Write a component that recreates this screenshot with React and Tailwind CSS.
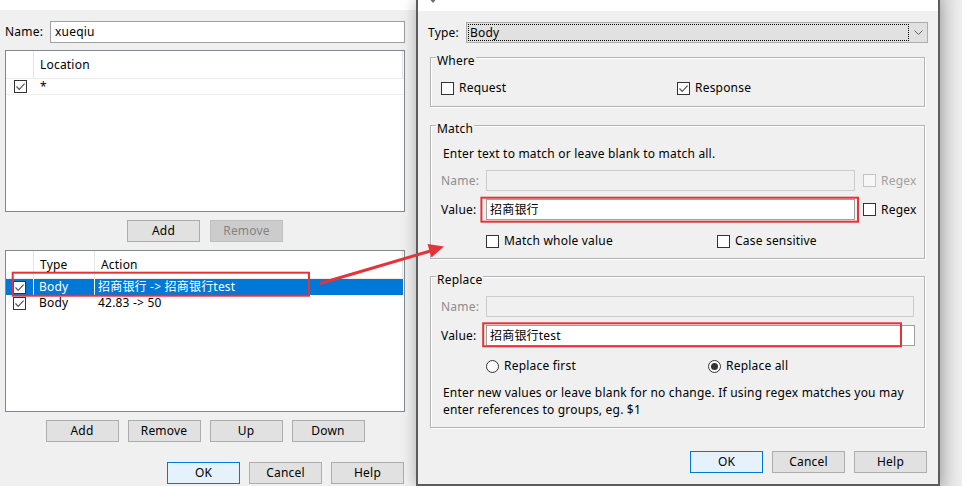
import React from 'react';

// small check glyph used by every checkbox
const CheckMark = ({ color = '#333' }) => (
  <svg width="11" height="11" viewBox="0 0 11 11" className="block">
    <path d="M1.5 5.5 L4.2 8.3 L9.6 2.6" fill="none" stroke={color} strokeWidth="1.2" />
  </svg>
);

function Checkbox({ checked, disabled }) {
  return (
    <span
      className={`flex items-center justify-center w-[13px] h-[13px] shrink-0 border ${
        disabled ? 'border-[#c4c4c4] bg-[#f7f7f7]' : 'border-[#333333] bg-white'
      }`}
    >
      {checked && <CheckMark color="#555" />}
    </span>
  );
}

function Radio({ checked }) {
  return (
    <span className="flex items-center justify-center w-[13px] h-[13px] shrink-0 rounded-full border border-[#333333] bg-white">
      {checked && <span className="w-[7px] h-[7px] rounded-full bg-[#333333]" />}
    </span>
  );
}

function Button({ children, primary, disabled }) {
  const tone = primary
    ? 'bg-[#e5f1fb] border-[#0078d7]'
    : disabled
    ? 'bg-[#cccccc] border-[#bfbfbf] text-[#838383]'
    : 'bg-[#e1e1e1] border-[#adadad]';
  return (
    <button type="button" className={`flex items-center justify-center w-[73px] h-[22px] border ${tone}`}>
      {children}
    </button>
  );
}

function Group({ title, className = '', children }) {
  return (
    <div
      className={`relative ml-[12px] w-[495px] border border-[#b4b4b4] shadow-[inset_1px_1px_0_#ffffff,1px_1px_0_#ffffff] ${className}`}
    >
      <span className="absolute -top-[5px] left-[5px] px-[1px] bg-[#f0f0f0] leading-[16px]">{title}</span>
      {children}
    </div>
  );
}

function Field({ label, width, value, disabled, extra }) {
  return (
    <div className="flex items-center pl-[10px] h-[21px]">
      <span className={`w-[45px] ${disabled ? 'text-[#8d8d8d]' : ''}`}>{label}</span>
      <div
        className={`h-[21px] flex items-center pl-[3px] border ${
          disabled ? 'border-[#cccccc] bg-[#f0f0f0]' : 'border-[#a0a0a0] bg-white'
        } ${width}`}
      >
        {value}
      </div>
      {extra}
    </div>
  );
}

const rules = [
  { type: 'Body', action: '招商银行 -> 招商银行test', selected: true },
  { type: 'Body', action: '42.83 -> 50' },
];

function LeftWindow() {
  return (
    <div className="w-[416px] h-full flex flex-col">
      <div className="h-[10px] bg-white" />
      <div className="flex flex-col w-[400px] ml-[5px] pt-[11px]">
        <div className="flex items-center h-[22px]">
          <span className="w-[45px]">Name:</span>
          <div className="w-[355px] h-[22px] flex items-center pl-[4px] border border-[#a0a0a0] bg-white">xueqiu</div>
        </div>

        {/* locations */}
        <div className="w-[400px] h-[162px] mt-[7px] border border-[#828790] bg-white">
          <div className="flex h-[28px] border-b border-[#ececec]">
            <div className="w-[28px] border-r border-[#e5e5e5]" />
            <div className="flex-1 flex items-center pl-[6px] mr-[1px] border-r border-[#e5e5e5]">Location</div>
          </div>
          <div className="flex h-[16px] items-center border-b border-[#f0f0f0]">
            <div className="w-[28px] flex justify-center">
              <Checkbox checked />
            </div>
            <div className="pl-[6px]">*</div>
          </div>
        </div>

        <div className="flex justify-center gap-[10px] mt-[8px]">
          <Button>Add</Button>
          <Button disabled>Remove</Button>
        </div>

        {/* rewrite rules */}
        <div className="w-[400px] h-[162px] mt-[8px] border border-[#828790] bg-white">
          <div className="flex h-[28px] border-b border-[#ececec]">
            <div className="w-[28px] border-r border-[#e5e5e5]" />
            <div className="w-[61px] flex items-center pl-[6px] border-r border-[#e5e5e5]">Type</div>
            <div className="flex-1 flex items-center pl-[6px] mr-[1px] border-r border-[#e5e5e5]">Action</div>
          </div>
          {rules.map((r, i) => (
            <div
              key={i}
              className={`flex h-[16px] items-center mr-[1px] ${r.selected ? 'bg-[#0078d7] text-white' : ''}`}
            >
              <div className={`w-[28px] h-full flex items-center justify-center border-r ${r.selected ? 'border-white' : 'border-transparent'}`}>
                <Checkbox checked />
              </div>
              <div className={`w-[61px] h-full flex items-center pl-[5px] border-r ${r.selected ? 'border-white' : 'border-transparent'}`}>
                {r.type}
              </div>
              <div className="flex-1 pl-[3px] whitespace-nowrap">{r.action}</div>
            </div>
          ))}
        </div>

        <div className="flex justify-center gap-[9px] mt-[8px]">
          <Button>Add</Button>
          <Button>Remove</Button>
          <Button>Up</Button>
          <Button>Down</Button>
        </div>

        <div className="flex justify-end gap-[9px] mt-[20px] pr-[1px]">
          <Button primary>OK</Button>
          <Button>Cancel</Button>
          <Button>Help</Button>
        </div>
      </div>
    </div>
  );
}

function RewriteDialog() {
  return (
    <div className="absolute left-[416px] top-0 w-[524px] h-[486px] flex flex-col bg-[#f0f0f0] border-l-2 border-r-2 border-b-2 border-[#5c5c5c] shadow-[0_0_14px_rgba(0,0,0,0.28)]">
      <div className="relative h-[11px] bg-white">
        <svg className="absolute left-[12px] top-0" width="6" height="4" viewBox="0 0 6 4">
          <path d="M0.5 0 L3 3 L5.5 0" fill="#6b6b6b" />
        </svg>
      </div>

      <div className="flex items-center mt-[11px] pl-[10px]">
        <span className="w-[38px]">Type:</span>
        <div className="flex w-[462px] h-[21px] border border-[#adadad] bg-[#e1e1e1]">
          <div className="flex-1 m-[1px] flex items-center pl-[1px] border border-dotted border-black">Body</div>
          <div className="w-[17px] flex items-center justify-center">
            <svg width="9" height="5" viewBox="0 0 9 5">
              <path d="M0.5 0.5 L4.5 4.5 L8.5 0.5" fill="none" stroke="#606060" strokeWidth="1" />
            </svg>
          </div>
        </div>
      </div>

      <Group title="Where" className="mt-[14px] h-[50px] pt-[21px]">
        <div className="flex items-center pl-[10px]">
          <div className="w-[236px] flex items-center gap-[5px]">
            <Checkbox />
            <span>Request</span>
          </div>
          <div className="flex items-center gap-[5px]">
            <Checkbox checked />
            <span>Response</span>
          </div>
        </div>
      </Group>

      <Group title="Match" className="mt-[18px] h-[134px] pt-[20px]">
        <div className="pl-[12px] leading-[16px]">Enter text to match or leave blank to match all.</div>
        <div className="mt-[8px]">
          <Field
            label="Name:"
            width="w-[369px]"
            disabled
            extra={
              <div className="flex items-center gap-[5px] ml-[8px] text-[#a0a0a0]">
                <Checkbox disabled />
                <span>Regex</span>
              </div>
            }
          />
        </div>
        <div className="mt-[8px]">
          <Field
            label="Value:"
            width="w-[369px]"
            value="招商银行"
            extra={
              <div className="flex items-center gap-[5px] ml-[8px]">
                <Checkbox />
                <span>Regex</span>
              </div>
            }
          />
        </div>
        <div className="flex items-center mt-[12px] pl-[55px]">
          <div className="w-[231px] flex items-center gap-[5px]">
            <Checkbox />
            <span>Match whole value</span>
          </div>
          <div className="flex items-center gap-[5px]">
            <Checkbox />
            <span>Case sensitive</span>
          </div>
        </div>
      </Group>

      <Group title="Replace" className="mt-[17px] h-[152px] pt-[19px]">
        <Field label="Name:" width="w-[428px]" disabled />
        <div className="mt-[8px]">
          <Field label="Value:" width="w-[429px]" value="招商银行test" />
        </div>
        <div className="flex items-center mt-[11px] pl-[55px]">
          <div className="w-[222px] flex items-center gap-[5px]">
            <Radio />
            <span>Replace first</span>
          </div>
          <div className="flex items-center gap-[5px]">
            <Radio checked />
            <span>Replace all</span>
          </div>
        </div>
        <div className="mt-[9px] pl-[12px] leading-[17px] whitespace-nowrap">
          <div>Enter new values or leave blank for no change. If using regex matches you may</div>
          <div>enter references to groups, eg. $1</div>
        </div>
      </Group>

      <div className="flex justify-end gap-[9px] mt-[23px] pr-[11px]">
        <Button primary>OK</Button>
        <Button>Cancel</Button>
        <Button>Help</Button>
      </div>
    </div>
  );
}

// red markup: boxes around the edited values and the arrow linking them
function Markup() {
  return (
    <svg className="absolute inset-0 pointer-events-none" width="962" height="486" viewBox="0 0 962 486">
      <g fill="none" stroke="#e5333a" strokeWidth="2">
        <rect x="12.7" y="272.7" width="296.3" height="23" />
        <rect x="481.4" y="197.7" width="376.6" height="24" />
        <rect x="483.2" y="323.3" width="417.8" height="23" />
      </g>
      <line x1="320" y1="283.5" x2="432" y2="250.5" stroke="#e5333a" strokeWidth="3" />
      <polygon points="444,246.5 431.5,257.5 427.5,244" fill="#e5333a" />
    </svg>
  );
}

export default function App() {
  return (
    <div className="relative w-[962px] h-[486px] overflow-hidden bg-[#f0f0f0] text-[12px] tracking-[0.2px] text-black font-['Noto_Sans','Noto_Sans_CJK_SC',sans-serif]">
      <div className="absolute right-0 top-0 w-[22px] h-full bg-gradient-to-r from-[#d6d6d6] to-[#efefef]" />
      <LeftWindow />
      <RewriteDialog />
      <Markup />
    </div>
  );
}
